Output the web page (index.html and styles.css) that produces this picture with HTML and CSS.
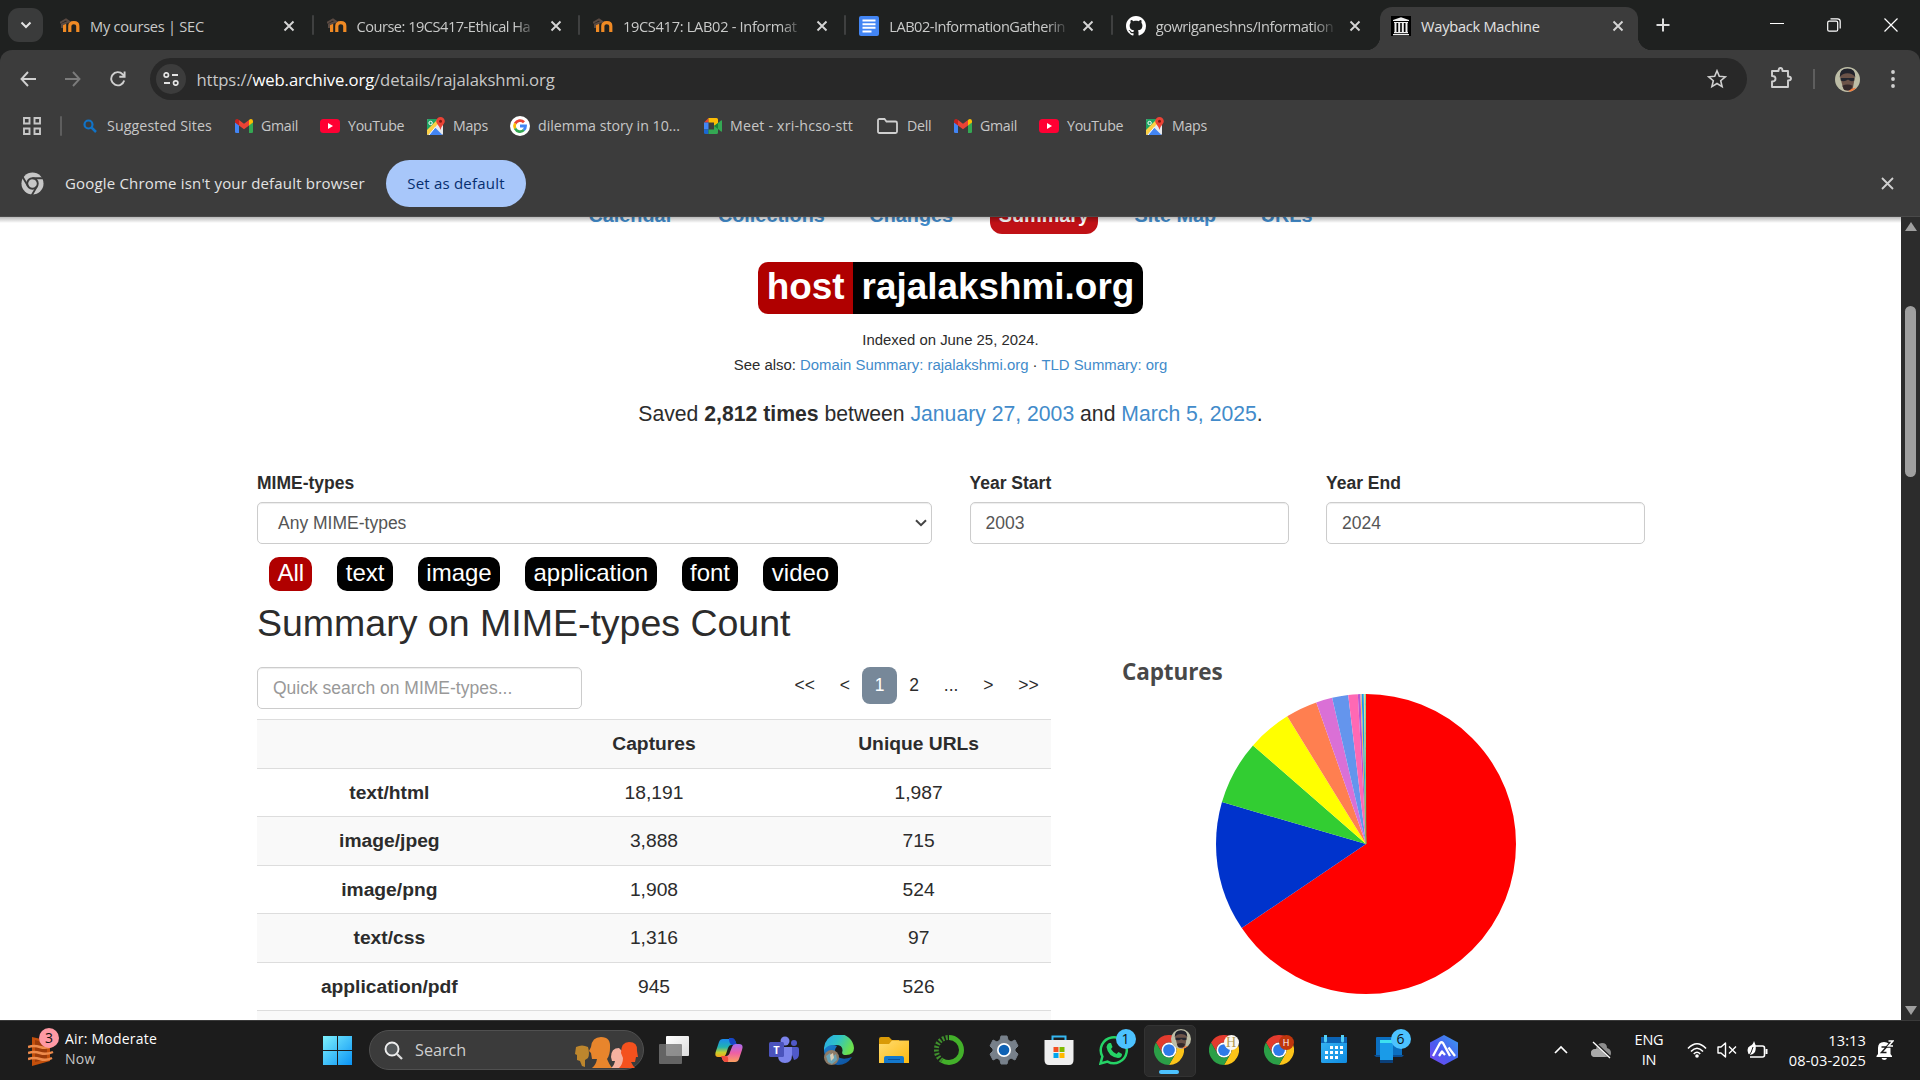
FILE: index.html
```html
<!DOCTYPE html>
<html lang="en">
<head>
<meta charset="utf-8">
<title>Wayback Machine</title>
<link rel="stylesheet" href="styles.css">
</head>
<body>
<svg class="defs" width="0" height="0" aria-hidden="true">
  <defs>
    <linearGradient id="gWin" x1="0" y1="0" x2="1" y2="1"><stop offset="0" stop-color="#7df1fd"/><stop offset="1" stop-color="#0a93f5"/></linearGradient>
    <linearGradient id="gTv" x1="0" y1="0" x2="1" y2="1"><stop offset="0" stop-color="#fff"/><stop offset="1" stop-color="#dcdcdc"/></linearGradient>
    <linearGradient id="gCpA" x1="0" y1="0" x2="0" y2="1"><stop offset="0" stop-color="#1a8bf0"/><stop offset=".45" stop-color="#22b2b0"/><stop offset=".75" stop-color="#c6d02c"/><stop offset="1" stop-color="#f9a11b"/></linearGradient>
    <linearGradient id="gCpB" x1="0" y1="0" x2="0" y2="1"><stop offset="0" stop-color="#a86bf0"/><stop offset=".5" stop-color="#ee5fa5"/><stop offset="1" stop-color="#fba060"/></linearGradient>
    <linearGradient id="gEdge" x1="0" y1="0" x2="1" y2=".4"><stop offset="0" stop-color="#2aa5ea"/><stop offset=".5" stop-color="#2ec3c8"/><stop offset="1" stop-color="#6be04e"/></linearGradient>
    <linearGradient id="gEdge2" x1="0" y1="0" x2="1" y2="1"><stop offset="0" stop-color="#1b7fd0"/><stop offset="1" stop-color="#0c4f9c"/></linearGradient>
    <linearGradient id="gFold" x1="0" y1="0" x2="1" y2="1"><stop offset="0" stop-color="#ffdc72"/><stop offset="1" stop-color="#fdb90f"/></linearGradient>
    <linearGradient id="gCal" x1="0" y1="0" x2="1" y2="1"><stop offset="0" stop-color="#38b6f5"/><stop offset="1" stop-color="#0f8be0"/></linearGradient>
    <linearGradient id="gHex" x1="0" y1="1" x2="1" y2="0"><stop offset="0" stop-color="#7a46f2"/><stop offset=".45" stop-color="#4a5cf0"/><stop offset="1" stop-color="#3a9df0"/></linearGradient>
    <symbol id="chrome" viewBox="0 0 48 48">
      <path fill="#e33b2e" d="M3.2 12A24 24 0 0 1 44.8 12H24A12 12 0 0 0 13.6 30Z"/>
      <path fill="#fcc419" d="M44.8 12A24 24 0 0 1 24 48L34.4 30A12 12 0 0 0 24 12Z"/>
      <path fill="#2b9f47" d="M24 48A24 24 0 0 1 3.2 12L13.6 30A12 12 0 0 0 34.4 30Z"/>
      <circle cx="24" cy="24" r="12" fill="#fff"/><circle cx="24" cy="24" r="9.4" fill="#2f7ae8"/>
    </symbol>
    <symbol id="moodle" viewBox="0 0 20 16">
      <path d="M4.600 14V6M9.800 14V8Q9.800 4.700 13.800 4.700T17.800 8V14" fill="none" stroke="#f08a24" stroke-width="3.200"/>
      <path d="M0 5L6 1.500L9 3.500L2 6.500V10" fill="none" stroke="#5a4a42" stroke-width="2"/>
    </symbol>
    <symbol id="x" viewBox="0 0 12 12"><path d="M1.500 1.500L10.500 10.500M10.500 1.500L1.500 10.500" fill="none" stroke="currentColor" stroke-width="1.900"/></symbol>
    <symbol id="gmail" viewBox="0 0 18 14">
      <path fill="#4285f4" d="M0 3V12.700Q0 14 1.300 14H4V6Z"/><path fill="#34a853" d="M18 3V12.700Q18 14 16.700 14H14V6Z"/>
      <path fill="#c5221f" d="M0 2Q.3 0 2 0Q3 0 4 1V6.500L0 3.500Z"/><path fill="#fbbc04" d="M18 2Q17.700 0 16 0Q15 0 14 1V6.500L18 3.500Z"/>
      <path fill="#ea4335" d="M4 1L9 4.800L14 1V6.500L9 10.200L4 6.500Z"/>
    </symbol>
    <symbol id="youtube" viewBox="0 0 20 14"><rect width="20" height="14" rx="3.500" fill="#ff0033"/><path d="M8 4L13 7L8 10Z" fill="#fff"/></symbol>
    <symbol id="maps" viewBox="0 0 18 18">
      <rect y="2" width="16" height="16" rx="1.500" fill="#e8eaed"/><path d="M0 3.500Q0 2 1.500 2H12L0 14Z" fill="#1fa463"/>
      <path d="M0 16.500V13L11 2H15L1.500 18Q0 18 0 16.500Z" fill="#fdd045"/><path d="M1.500 18L8 10.500L15.500 18Z" fill="#4285f4"/>
      <path d="M2 18L8.500 10" stroke="#fff" stroke-width="1"/><circle cx="3.600" cy="6" r="1.700" fill="none" stroke="#fff"/>
      <path d="M13.500 0A4.300 4.300 0 0 1 17.800 4.300C17.800 7 14.500 8.500 13.500 13C12.500 8.500 9.200 7 9.200 4.300A4.300 4.300 0 0 1 13.500 0Z" fill="#ea4335"/><circle cx="13.500" cy="4.200" r="1.500" fill="#811b14"/>
    </symbol>
    <symbol id="face" viewBox="0 0 24 24">
      <circle cx="12" cy="12" r="12" fill="#bdbda6"/><path d="M5 10Q5 2 12 2T19 10L17 21Q12 25 8 21Z" fill="#6b5248"/>
      <path d="M4.500 10Q4 1.500 12 1.500T19.500 10Q17 6 12 6Q7 6 4.500 10Z" fill="#22232c"/><path d="M5.500 10.500H18.500V13Q15.500 14.500 12.500 12Q9 14.500 5.500 13Z" fill="#23262f"/>
      <path d="M7 18Q12 15.500 17 18L15 22H9Z" fill="#33282a"/><path d="M13 23.500Q16 20 20.500 20Q17 24 13 23.500Z" fill="#f47d3c"/>
    </symbol>
  </defs>
</svg>

<div class="screen">
  <header class="chrome">
    <div class="tabstrip">
      <div class="tabmenu"><svg width="12" height="8" viewBox="0 0 12 8"><path d="M1.500 1.500L6 6L10.500 1.500" fill="none" stroke="#e3e3e3" stroke-width="2"/></svg></div>
      <div class="tabs">
        <div class="tab"><svg class="fav" viewBox="0 0 20 16"><use href="#moodle"/></svg><span class="tabtitle">My courses | SEC</span><svg class="tabx"><use href="#x"/></svg></div>
        <div class="tab"><svg class="fav" viewBox="0 0 20 16"><use href="#moodle"/></svg><span class="tabtitle fade">Course: 19CS417-Ethical Ha</span><svg class="tabx"><use href="#x"/></svg></div>
        <div class="tab"><svg class="fav" viewBox="0 0 20 16"><use href="#moodle"/></svg><span class="tabtitle fade">19CS417: LAB02 - Informat</span><svg class="tabx"><use href="#x"/></svg></div>
        <div class="tab"><svg class="fav" viewBox="0 0 20 20"><rect width="20" height="20" rx="2" fill="#4285f4"/><path d="M3.500 4.500H16.500M3.500 8.200H16.500M3.500 11.800H16.500M3.500 15.500H12.500" stroke="#fff" stroke-width="2"/></svg><span class="tabtitle fade">LAB02-InformationGatherin</span><svg class="tabx"><use href="#x"/></svg></div>
        <div class="tab last"><svg class="fav" viewBox="0 0 16 16"><path fill="#fff" d="M8 0C3.580 0 0 3.580 0 8c0 3.540 2.290 6.530 5.470 7.590.4.070.55-.17.55-.38 0-.19-.01-.82-.01-1.490-2.010.37-2.530-.49-2.690-.94-.09-.23-.48-.94-.82-1.130-.28-.15-.68-.52-.01-.53.63-.01 1.080.58 1.230.82.72 1.210 1.870.87 2.330.66.070-.52.280-.87.510-1.070-1.780-.2-3.640-.89-3.640-3.950 0-.87.310-1.590.820-2.150-.08-.2-.36-1.020.08-2.120 0 0 .67-.21 2.200.82.64-.18 1.320-.27 2-.27s1.360.09 2 .27c1.530-1.040 2.200-.82 2.200-.82.44 1.100.16 1.920.08 2.120.51.56.82 1.270.82 2.150 0 3.070-1.870 3.750-3.650 3.950.29.25.54.73.54 1.480 0 1.070-.01 1.930-.01 2.200 0 .21.15.46.55.38A8.010 8.010 0 0 0 16 8c0-4.420-3.580-8-8-8z"/></svg><span class="tabtitle fade">gowriganeshns/Information</span><svg class="tabx"><use href="#x"/></svg></div>
        <div class="tab active"><svg class="fav" viewBox="0 0 20 20"><rect width="20" height="20" fill="#000"/><path d="M2 4L10 1.200L18 4V5H2ZM3 6H17V7H3ZM3 16H17V17.200H3ZM2 18H18V19.200H2Z" fill="#eee"/><path d="M4.500 7V16M8.200 7V16M11.800 7V16M15.500 7V16" stroke="#eee" stroke-width="2"/></svg><span class="tabtitle">Wayback Machine</span><svg class="tabx"><use href="#x"/></svg></div>
      </div>
      <svg class="plus" width="14" height="14" viewBox="0 0 14 14"><path d="M7 .5V13.500M.5 7H13.500" stroke="#dcdcdc" stroke-width="2"/></svg>
      <div class="wincontrols">
        <svg width="14" height="14" viewBox="0 0 14 14"><path d="M0 5.500H14" stroke="#fff"/></svg>
        <svg width="14" height="14" viewBox="0 0 14 14"><rect x=".7" y="3.200" width="10" height="10" rx="1.500" fill="none" stroke="#fff" stroke-width="1.200"/><path d="M3.500 .8H10.500Q13.200 .8 13.200 3.500V10.500" fill="none" stroke="#fff" stroke-width="1.200"/></svg>
        <svg width="14" height="14" viewBox="0 0 14 14"><path d="M.5 .5L13.500 13.500M13.500 .5L.5 13.500" stroke="#fff" stroke-width="1.200"/></svg>
      </div>
    </div>

    <div class="toolbar">
      <div class="navbtns">
        <svg width="16" height="16" viewBox="0 0 16 16"><path d="M8 1L1.500 8L8 15M1.500 8H16" fill="none" stroke="#d0d0d0" stroke-width="1.900"/></svg>
        <svg width="16" height="16" viewBox="0 0 16 16"><path d="M8 1L14.500 8L8 15M14.500 8H0" fill="none" stroke="#7b7b7b" stroke-width="1.900"/></svg>
        <svg width="16" height="16" viewBox="0 0 16 16"><path d="M14.200 9.500A6.600 6.600 0 1 1 12.700 3.300L14.500 5.200M14.600 .5V5.800H9.300" fill="none" stroke="#d0d0d0" stroke-width="1.900"/></svg>
      </div>
      <div class="omnibox">
        <div class="siteinfo"><svg width="16" height="14" viewBox="0 0 16 14"><path d="M9 3H15M1 11H7" stroke="#e3e3e3" stroke-width="2"/><circle cx="3.300" cy="3" r="2.200" fill="none" stroke="#e3e3e3" stroke-width="1.700"/><circle cx="12.700" cy="11" r="2.200" fill="none" stroke="#e3e3e3" stroke-width="1.700"/></svg></div>
        <span class="url">https://<b>web.archive.org</b>/details/rajalakshmi.org</span>
        <svg class="star" width="20" height="20" viewBox="0 0 20 20"><path d="M10 1.800L12.300 7.300L18.300 7.800L13.700 11.700L15.100 17.600L10 14.500L4.900 17.600L6.300 11.700L1.700 7.800L7.700 7.300Z" fill="none" stroke="#d0d0d0" stroke-width="1.600"/></svg>
      </div>
      <svg class="ext" width="22" height="22" viewBox="0 0 22 22"><path d="M2 4H8.500Q8.500 1 10.500 1T12.500 4H18V9.500Q21 9.500 21 11.500T18 13.500V20H2V14.500Q5.500 14.500 5.500 11.700T2 9Z" fill="none" stroke="#d0d0d0" stroke-width="1.900" stroke-linejoin="round"/></svg>
      <i class="tsep"></i>
      <svg class="avatar"><use href="#face"/></svg>
      <svg class="dots" width="4" height="18" viewBox="0 0 4 18"><circle cx="2" cy="2" r="1.900" fill="#d0d0d0"/><circle cx="2" cy="9" r="1.900" fill="#d0d0d0"/><circle cx="2" cy="16" r="1.900" fill="#d0d0d0"/></svg>
    </div>

    <nav class="bookmarks">
      <svg class="apps" width="18" height="18" viewBox="0 0 18 18"><path d="M1 1H6.500V6.500H1ZM11.500 1H17V6.500H11.500ZM1 11.500H6.500V17H1ZM11.500 11.500H17V17H11.500Z" fill="none" stroke="#c7c7c7" stroke-width="1.900"/></svg>
      <i class="bsep"></i>
      <a class="bm b1"><svg width="14" height="14" viewBox="0 0 14 14"><circle cx="5.500" cy="5.500" r="4" fill="none" stroke="#1173c7" stroke-width="2.200"/><path d="M8.500 8.500L13 13" stroke="#1173c7" stroke-width="2.500"/></svg><span>Suggested Sites</span></a>
      <a class="bm b2"><svg width="18" height="14"><use href="#gmail"/></svg><span>Gmail</span></a>
      <a class="bm b3"><svg width="20" height="14"><use href="#youtube"/></svg><span>YouTube</span></a>
      <a class="bm b4"><svg width="18" height="18"><use href="#maps"/></svg><span>Maps</span></a>
      <a class="bm b5"><svg width="20" height="20" viewBox="0 0 20 20"><circle cx="10" cy="10" r="10" fill="#fff"/><g fill="none" stroke-width="2.800"><path d="M5.200 7.500A5.500 5.500 0 0 1 14 6.200" stroke="#ea4335"/><path d="M5.200 12.600A5.500 5.500 0 0 1 5.200 7.400" stroke="#fbbc05"/><path d="M14 13.900A5.500 5.500 0 0 1 5.100 12.500" stroke="#34a853"/><path d="M10 10H15.500Q15.500 12.500 13.800 14" stroke="#4285f4"/></g></svg><span>dilemma story in 10...</span></a>
      <a class="bm b6"><svg width="18" height="16" viewBox="0 0 18 16"><path d="M0 4.500L4.500 0V4.500Z" fill="#ea4335"/><path d="M4.500 0H12.500Q14 0 14 1.500V6L10 8V4.500H4.500Z" fill="#fbbc04"/><path d="M0 4.500H4.500V11.500H0Z" fill="#4285f4"/><path d="M0 11.500H4.500V16H1.500Q0 16 0 14.500Z" fill="#1967d2"/><path d="M4.500 11.500H10V8L14 5L17 2.500Q18 2 18 3V13Q18 14 17 13.500L14 11V14.500Q14 16 12.500 16H4.500Z" fill="#34a853"/><path d="M10 8L14 5V11Z" fill="#188038"/></svg><span>Meet - xri-hcso-stt</span></a>
      <a class="bm b7"><svg width="21" height="16" viewBox="0 0 21 16"><path d="M1 2.500Q1 1 2.500 1H7.500L9.500 3.500H18.500Q20 3.500 20 5V13.500Q20 15 18.500 15H2.500Q1 15 1 13.500Z" fill="none" stroke="#d0d0d0" stroke-width="1.800"/></svg><span>Dell</span></a>
      <a class="bm b8"><svg width="18" height="14"><use href="#gmail"/></svg><span>Gmail</span></a>
      <a class="bm b9"><svg width="20" height="14"><use href="#youtube"/></svg><span>YouTube</span></a>
      <a class="bm b10"><svg width="18" height="18"><use href="#maps"/></svg><span>Maps</span></a>
    </nav>

    <div class="infobar">
      <svg width="23" height="23" viewBox="0 0 48 48"><circle cx="24" cy="24" r="23" fill="#c7c7c7"/><circle cx="24" cy="24" r="11" fill="none" stroke="#3c3c3c" stroke-width="4"/><path d="M24 13H46M14.500 29.500L3.500 10.500M33.500 29.500L22.500 48.500" stroke="#3c3c3c" stroke-width="4"/></svg>
      <span class="infotext">Google Chrome isn't your default browser</span>
      <span class="setdefault">Set as default</span>
      <svg class="infox" width="13" height="13" viewBox="0 0 13 13"><path d="M1 1L12 12M12 1L1 12" stroke="#d0d0d0" stroke-width="1.800"/></svg>
    </div>
  </header>

  <div class="viewport">
    <main class="page">
      <nav class="views"><a>Calendar</a><a>Collections</a><a>Changes</a><a class="on">Summary</a><a>Site Map</a><a>URLs</a></nav>
      <h1 class="host"><span class="kind">host</span><span class="name">rajalakshmi.org</span></h1>
      <p class="meta">Indexed on June 25, 2024.</p>
      <p class="meta">See also: <a>Domain Summary: rajalakshmi.org</a> · <a>TLD Summary: org</a></p>
      <p class="saved">Saved <b>2,812 times</b> between <a>January 27, 2003</a> and <a>March 5, 2025</a>.</p>

      <div class="filters">
        <div class="field"><label>MIME-types</label><div class="control select"><span>Any MIME-types</span><svg width="12" height="8" viewBox="0 0 12 8"><path d="M1 1.200L6 6.200L11 1.200" fill="none" stroke="#444" stroke-width="2"/></svg></div></div>
        <div class="field"><label>Year Start</label><div class="control">2003</div></div>
        <div class="field"><label>Year End</label><div class="control">2024</div></div>
      </div>
      <div class="pills"><span class="all">All</span><span>text</span><span>image</span><span>application</span><span>font</span><span>video</span></div>
      <h2>Summary on MIME-types Count</h2>

      <div class="split">
        <section class="tablecol">
          <div class="tabletools">
            <div class="control search">Quick search on MIME-types...</div>
            <div class="pager"><span>&lt;&lt;</span><span>&lt;</span><span class="cur">1</span><span>2</span><span>...</span><span>&gt;</span><span>&gt;&gt;</span></div>
          </div>
          <div class="table">
            <div class="row head"><b></b><b>Captures</b><b>Unique URLs</b></div>
            <div class="row"><b>text/html</b><span>18,191</span><span>1,987</span></div>
            <div class="row"><b>image/jpeg</b><span>3,888</span><span>715</span></div>
            <div class="row"><b>image/png</b><span>1,908</span><span>524</span></div>
            <div class="row"><b>text/css</b><span>1,316</span><span>97</span></div>
            <div class="row"><b>application/pdf</b><span>945</span><span>526</span></div>
            <div class="row"></div>
          </div>
        </section>
        <section class="chart">
          <h3>Captures</h3>
          <svg class="pie" width="300" height="300" viewBox="0 0 300 300">
            <g fill="none" stroke-width="150" transform="rotate(-90 150 150)">
              <circle cx="150" cy="150" r="75" pathLength="360" stroke="#ff0000" stroke-dasharray="235.900 124.100"/>
              <circle cx="150" cy="150" r="75" pathLength="360" stroke="#0033cc" stroke-dasharray="50.400 309.600" stroke-dashoffset="-235.900"/>
              <circle cx="150" cy="150" r="75" pathLength="360" stroke="#32cd32" stroke-dasharray="24.800 335.200" stroke-dashoffset="-286.300"/>
              <circle cx="150" cy="150" r="75" pathLength="360" stroke="#ffff00" stroke-dasharray="17.200 342.800" stroke-dashoffset="-311.100"/>
              <circle cx="150" cy="150" r="75" pathLength="360" stroke="#ff7f50" stroke-dasharray="12.300 347.700" stroke-dashoffset="-328.300"/>
              <circle cx="150" cy="150" r="75" pathLength="360" stroke="#da70d6" stroke-dasharray="6.300 353.700" stroke-dashoffset="-340.600"/>
              <circle cx="150" cy="150" r="75" pathLength="360" stroke="#6495ed" stroke-dasharray="6.200 353.800" stroke-dashoffset="-346.900"/>
              <circle cx="150" cy="150" r="75" pathLength="360" stroke="#ff69b4" stroke-dasharray="3.700 356.300" stroke-dashoffset="-353.100"/>
              <circle cx="150" cy="150" r="75" pathLength="360" stroke="#ba55d3" stroke-dasharray="1 359" stroke-dashoffset="-356.800"/>
              <circle cx="150" cy="150" r="75" pathLength="360" stroke="#e59a2c" stroke-dasharray=".5 359.500" stroke-dashoffset="-357.800"/>
              <circle cx="150" cy="150" r="75" pathLength="360" stroke="#1e9be8" stroke-dasharray=".8 359.200" stroke-dashoffset="-358.300"/>
              <circle cx="150" cy="150" r="75" pathLength="360" stroke="#c4b43a" stroke-dasharray=".4 359.600" stroke-dashoffset="-359.100"/>
              <circle cx="150" cy="150" r="75" pathLength="360" stroke="#2fc46c" stroke-dasharray=".5 359.500" stroke-dashoffset="-359.500"/>
            </g>
          </svg>
        </section>
      </div>
    </main>
    <div class="scrollbar"><i class="up"></i><i class="thumb"></i><i class="down"></i></div>
  </div>

  <footer class="taskbar">
    <div class="weather">
      <div class="stack"><svg width="26" height="30" viewBox="0 0 26 30"><path d="M4 1L22 5V25L4 30Z" fill="#c4500c"/><path d="M7 4L19 7V23L7 26Z" fill="#9c3b0a"/><path d="M0 11Q6 9 12 11T24 10M0 17Q6 15 12 17T25 16M0 23Q6 21 12 23T24 22" fill="none" stroke="#ee8b4c" stroke-width="2.400"/></svg><em class="badge pink">3</em></div>
      <div class="wtext"><span>Air: Moderate</span><small>Now</small></div>
    </div>
    <svg class="start" width="29" height="29" viewBox="0 0 29 29"><path d="M0 0H14V14H0ZM15 0H29V14H15ZM0 15H14V29H0ZM15 15H29V29H15Z" fill="url(#gWin)"/></svg>
    <div class="searchbox">
      <svg width="19" height="19" viewBox="0 0 19 19"><circle cx="8" cy="8" r="6.500" fill="#54585a" stroke="#eee" stroke-width="1.900"/><path d="M12.700 12.700L18 18" stroke="#ddd" stroke-width="2.300"/></svg>
      <span>Search</span>
      <svg class="people" width="64" height="32" viewBox="0 0 64 32"><path d="M1 11Q7 8 13 11Q15 18 13 22L10 24V31L7 30L5 25L2 24L2 19L0 18Z" fill="#bd862d"/><path d="M17 32Q21 29 22 23H17L16 17L14 15L16 11Q17 1 26 1Q36 1 35 12Q35 19 32 23Q34 28 37 32Z" fill="#e8852c"/><path d="M36 32Q39 30 40 25H37L36 21Q36 12 44 12L50 18V32Z" fill="#f4b1a0"/><path d="M44 32Q48 28 48 22L46 17Q46 6 54 6Q63 6 62 15L63 21H61L60 26H56Q58 30 60 32Z" fill="#f4511e"/></svg>
    </div>
    <div class="apps-row">
      <span><svg width="30" height="30" viewBox="0 0 30 30"><rect x="7" y="1" width="23" height="20" rx="1" fill="url(#gTv)"/><rect x="0" y="9" width="23" height="20" rx="1" fill="#777" fill-opacity=".8"/></svg></span>
      <span><svg width="28" height="28" viewBox="0 0 28 28"><path d="M8 3H17Q20 3 21 7L22 9H16Q14 9 13 12L11 18Q10 21 7 21H3Q-1 21 1 15L4 6Q5 3 8 3Z" fill="url(#gCpA)"/><path d="M14 2H17Q20 2 21 7L22 9H17Q14 8 14 2Z" fill="#1746c7"/><path d="M20 26H11Q8 26 7 22L6 20H11Q14 20 15 16L17 11Q18 8 21 8H24Q29 8 27 14L24 23Q23 26 20 26Z" fill="url(#gCpB)"/><path d="M6 20H11Q14 20 13 26H11Q8 26 7 22Z" fill="#ee4b3e"/></svg></span>
      <span><svg width="30" height="30" viewBox="0 0 30 30"><circle cx="25" cy="8" r="3" fill="#5059c9"/><path d="M20 12H28Q30 12 30 14V19Q30 24 25 25Z" fill="#5059c9"/><circle cx="16" cy="6" r="4.500" fill="#7b83eb"/><path d="M9 12H23V20Q23 28 16 28Q9 28 9 20Z" fill="#7b83eb"/><rect x="0" y="7" width="15" height="15" rx="1.500" fill="#4b53bc"/><text x="7.500" y="18.500" class="teamsT">T</text></svg></span>
      <span><svg width="30" height="30" viewBox="0 0 30 30"><path d="M0 15A15 15 0 0 1 30 13Q30 20 22 20Q17 20 18.500 16Q19 10 12 10Q4 10 0 17Z" fill="url(#gEdge)"/><path d="M0 15Q5 8 13 11Q9 16 13 21Q18 26 28 22Q23 30 14 30A15 15 0 0 1 0 15Z" fill="url(#gEdge2)"/><circle cx="7.500" cy="22.500" r="7.500" fill="#8d7b68"/><path d="M2 21L6 18L8 22L12 19L13 25L8 29L4 27Z" fill="#6aa3b6"/><path d="M6 20L9 18L10 23L7 26Z" fill="#d9cdb7"/></svg></span>
      <span><svg width="30" height="30" viewBox="0 0 30 30"><path d="M0 4Q0 2 2 2H10L13 5H20V12H0Z" fill="#d99a07"/><path d="M0 9H10L13 5.500H30V28H0Z" fill="url(#gFold)"/><path d="M5 28V23Q5 21 7 21H23Q25 21 25 23V28Z" fill="#1478cc"/><path d="M9 24.500H21" stroke="#0b519b"/></svg></span>
      <span><svg width="30" height="30" viewBox="0 0 30 30"><path d="M15 2.500A12.500 12.500 0 0 1 15 27.500Q11 27.500 8 25.500" fill="none" stroke="#43b02a" stroke-width="5"/><path d="M8 25.500A12.500 12.500 0 0 1 15 2.500" fill="none" stroke="#3f8f2d" stroke-width="5" stroke-dasharray="2 1.600"/></svg></span>
      <span><svg width="30" height="30" viewBox="0 0 30 30"><path d="M12 1H18L19 5L22 7L26 5L29 11L26 14V16L29 19L26 25L22 23L19 25L18 29H12L11 25L8 23L4 25L1 19L4 16V14L1 11L4 5L8 7L11 5Z" fill="#77808a" stroke="#77808a" stroke-linejoin="round"/><circle cx="15" cy="15" r="7" fill="#fff"/><circle cx="15" cy="15" r="5.300" fill="#0f62b4"/></svg></span>
      <span><svg width="30" height="30" viewBox="0 0 30 30"><path d="M8.500 7V1.500H21.500V7" fill="none" stroke="#35b7f1" stroke-width="2"/><path d="M.5 5H29.500V25Q29.500 30 25 30H5Q.5 30 .5 25Z" fill="#efefef"/><path d="M9.500 12H14.500V17H9.500Z" fill="#f25022"/><path d="M15.500 12H20.500V17H15.500Z" fill="#7fba00"/><path d="M9.500 18H14.500V23H9.500Z" fill="#00a4ef"/><path d="M15.500 18H20.500V23H15.500Z" fill="#ffb900"/></svg></span>
      <span><svg width="30" height="30" viewBox="0 0 30 30"><path d="M1.500 28.500L3.400 21.500A13 13 0 1 1 8.500 26.600Z" fill="none" stroke="#25d366" stroke-width="2.500"/><path d="M10 8L12 8L13.500 12L12 14Q14 17.500 17.500 19L19.500 17L23 19Q23 23 19 23Q9 21.500 7.500 12Q8 9 10 8Z" fill="#25d366"/></svg><em class="badge blue">1</em></span>
      <span class="running"><svg width="30" height="30"><use href="#chrome"/></svg><svg class="mini"><use href="#face"/></svg></span>
      <span><svg width="30" height="30"><use href="#chrome"/></svg><em class="chip cream">H</em></span>
      <span><svg width="30" height="30"><use href="#chrome"/></svg><em class="chip brick">H</em></span>
      <span><svg width="30" height="30" viewBox="0 0 30 30"><rect x="2" y="2" width="26" height="26" rx="1.500" fill="url(#gCal)"/><path d="M2 2H28V8H2Z" fill="#0b63b5"/><path d="M6.500 0V6M23.500 0V6" stroke="#54d1f7" stroke-width="3" stroke-linecap="round"/><path d="M11 12.500H14M16 12.500H19M21 12.500H24M6 17.500H9M11 17.500H14M16 17.500H19M21 17.500H24M6 22.500H9M11 22.500H14M16 22.500H19" stroke="#fff" stroke-width="3"/></svg></span>
      <span><svg width="30" height="30" viewBox="0 0 30 30"><rect x="2" y="2" width="26" height="19" rx="1" fill="#0b6fc0"/><path d="M0 20H30L28 22H2Z" fill="#0b4f93"/><rect x="6" y="5" width="13" height="23" rx="1" fill="#1a9be8"/><path d="M6 5H19V8H6Z" fill="#3ee0f0"/><path d="M6 25H19V28H6Z" fill="#0b3f78"/></svg><em class="badge blue">6</em></span>
      <span><svg width="30" height="30" viewBox="0 0 30 30"><path d="M15 0L29 7.500V22.500L15 30L1 22.500V7.500Z" fill="url(#gHex)"/><path d="M4 21L11 8Q12.500 6.500 14 8L21 21M10 21L13 16.500L16 20M19.500 12.500L26 21" fill="none" stroke="#fff" stroke-width="2.300" stroke-linejoin="round"/></svg></span>
    </div>
    <div class="tray">
      <svg class="chev" width="14" height="9" viewBox="0 0 14 9"><path d="M1 8L7 2L13 8" fill="none" stroke="#fff" stroke-width="1.700"/></svg>
      <svg class="cloud" width="22" height="18" viewBox="0 0 22 18"><path d="M5 16Q1 16 1 12T6 8Q7 2 12 2T17 7Q21 8 21 12T17 16Z" fill="#8d8d8d"/><path d="M6 8Q12 7 16 16H5Q1 16 1 12T6 8Z" fill="#aaa"/><path d="M3.500 .5L20.500 16.500" stroke="#1c1c1c" stroke-width="2.500"/><path d="M3 1L20 17" stroke="#fff" stroke-width="1.300"/></svg>
      <div class="lang"><span>ENG</span><span>IN</span></div>
      <svg class="wifi" width="20" height="16" viewBox="0 0 20 16"><path d="M1 6.500Q10 -3 19 6.500M4 9.500Q10 3 16 9.500M6.800 12Q10 8.500 13.200 12" fill="none" stroke="#fff" stroke-width="1.600"/><circle cx="10" cy="14" r="1.800" fill="#fff"/></svg>
      <svg class="vol" width="20" height="16" viewBox="0 0 20 16"><path d="M1 5H4L8.500 1V15L4 11H1Z" fill="none" stroke="#fff" stroke-width="1.400" stroke-linejoin="round"/><path d="M12 4.500L19 11.500M19 4.500L12 11.500" stroke="#fff" stroke-width="1.400"/></svg>
      <svg class="batt" width="21" height="18" viewBox="0 0 21 18"><path d="M8 5H15.500Q17.500 5 17.500 7V14Q17.500 16 15.500 16H3" fill="none" stroke="#fff" stroke-width="1.600"/><path d="M19.500 8V13" stroke="#fff" stroke-width="2"/><path d="M7 0Q10 6 8 11Q5 15 1.500 13Q-1 7 3 5Q6 4 7 0Z" fill="#fff"/><path d="M6 6Q5 11 1 16" fill="none" stroke="#1c1c1c"/></svg>
      <div class="clock"><span>13:13</span><span>08-03-2025</span></div>
      <svg class="bell" width="18" height="20" viewBox="0 0 18 20"><path d="M2 14V8Q2 2 8 2T14.500 8V14L16 16V17H.5V16Z" fill="#fff"/><path d="M5.500 18H11Q10.500 20 8.300 20T5.500 18Z" fill="#fff"/><path d="M5.500 7H10.500L5.500 12.500H10.500" fill="none" stroke="#1c1c1c" stroke-width="1.500"/><path d="M12.500 1H17L12.500 6H17" fill="none" stroke="#1c1c1c" stroke-width="3.500"/><path d="M12.500 1H17L12.500 6H17" fill="none" stroke="#fff" stroke-width="1.500"/></svg>
    </div>
  </footer>
</div>
</body>
</html>
```

FILE: styles.css
```css
* { box-sizing: border-box; }
body { margin: 0; background: #fff; }
svg { display: block; flex: none; }
.defs { position: absolute; }
.screen { width: 1920px; height: 1080px; overflow: hidden; display: flex; flex-direction: column; font-family: "Open Sans", "Noto Sans", sans-serif; }

/* Browser frame */
.chrome { height: 217px; flex: none; background: #1f2020; color: #e3e3e3; font-size: 14.2px; }
.tabstrip { height: 50px; display: flex; align-items: center; padding-left: 8px; background: #1f2120; }
.tabmenu { width: 35px; height: 34px; border-radius: 11px; background: #3a3b3b; display: flex; align-items: center; justify-content: center; }
.tabs { display: flex; height: 50px; margin-left: 13px; font-size: 14.600px; }
.tab { position: relative; width: 266.400px; height: 50px; display: flex; align-items: center; padding-left: 12px; padding-top: 1px; color: #c9cac9; letter-spacing: -.25px; }
.tab::after { content: ""; position: absolute; right: 1px; top: 15px; width: 2px; height: 20px; background: #3f4040; border-radius: 1px; }
.tab:first-child { padding-left: 4px; width: 258.500px; }
.tab.last::after, .tab.active::after { content: none; }
.fav { width: 20px; height: 20px; }
.tabtitle { width: 179px; margin-left: 10px; white-space: nowrap; line-height: 22px; flex: none; }
.tabtitle.fade { -webkit-mask-image: linear-gradient(90deg, #000 88%, transparent 101%); mask-image: linear-gradient(90deg, #000 88%, transparent 101%); }
.tab:nth-child(2) .tabtitle { letter-spacing: -.5px; }
.tab:nth-child(3) .tabtitle { letter-spacing: -.3px; }
.tab:nth-child(4) .tabtitle { letter-spacing: -.5px; }
.tab:nth-child(5) .tabtitle { letter-spacing: -.45px; }
.tabx { width: 12px; height: 12px; margin-left: 14px; color: #d5d5d5; }
.tab.active { width: 258px; height: 43px; margin-top: 7px; padding: 0 0 6px 11px; background: #3c3c3c; border-radius: 12px 12px 0 0; color: #e3e3e3; }
.tab.active::before { content: ""; position: absolute; left: -14px; right: -14px; bottom: 0; height: 14px; background: radial-gradient(circle at 0 0, transparent 14px, #3c3c3c 14.500px) left / 14px 14px no-repeat, radial-gradient(circle at 100% 0, transparent 14px, #3c3c3c 14.500px) right / 14px 14px no-repeat; }
.tab.active .tabtitle { width: 181px; }
.tab.active .tabx { margin-left: 10px; }
.plus { margin-left: 18px; }
.wincontrols { display: flex; gap: 43px; margin-left: auto; margin-right: 22px; padding-bottom: 1px; }
.toolbar { height: 58px; display: flex; align-items: center; background: #3c3c3c; border-radius: 12px 12px 0 0; padding: 0 21px 0 20px; }
.navbtns { display: flex; gap: 29px; width: 130px; padding-bottom: 1px; }
.omnibox { width: 1597px; height: 42px; border-radius: 21px; background: #282828; display: flex; align-items: center; padding-left: 6px; }
.siteinfo { width: 30px; height: 30px; border-radius: 50%; background: #3c3c3c; display: flex; align-items: center; justify-content: center; }
.url { margin-left: 10.500px; font-size: 16.700px; letter-spacing: -.12px; color: #c7c7c7; white-space: nowrap; }
.url b { font-weight: 400; color: #fff; }
.star { margin-left: auto; margin-right: 20px; }
.ext { margin-left: 23px; margin-top: -2px; }
.tsep { width: 2px; height: 20px; background: #5e5e5e; margin-left: 21px; }
.avatar { width: 25px; height: 25px; margin-left: 20px; }
.dots { margin-left: auto; margin-right: 4px; }
.bookmarks { height: 36px; display: flex; align-items: center; background: #3c3c3c; padding: 0 0 1px 23px; color: #c7c7c7; letter-spacing: -.3px; }
.bsep { width: 2px; height: 20px; margin: 0 21px 0 19px; background: #5e5e5e; border-radius: 1px; }
.bm { display: flex; align-items: center; gap: 8px; white-space: nowrap; }
.bm span { margin-top: -1px; }
.b1 { gap: 10px; width: 152px; letter-spacing: .12px; }
.b2 { width: 85px; }
.b3 { width: 107px; }
.b4 { width: 83px; }
.b5 { width: 194px; letter-spacing: 0; }
.b6 { width: 173px; letter-spacing: .2px; }
.b7 { gap: 9px; width: 77px; }
.b8 { width: 85px; }
.b9 { width: 107px; }
.infobar { height: 73px; background: #3c3c3c; display: flex; align-items: center; padding: 6px 26px 0 21px; border-bottom: 1px solid #4a4a4a; white-space: nowrap; }
.infotext { width: 321px; margin-left: 21px; font-size: 15px; letter-spacing: .18px; }
.setdefault { width: 140px; height: 47px; border-radius: 24px; background: #a8c7fa; color: #062e6f; display: flex; align-items: center; justify-content: center; font-weight: 500; font-size: 15px; letter-spacing: .2px; }
.infox { margin-left: auto; }

/* Web page */
.viewport { height: 803px; flex: none; display: flex; position: relative; background: #fff; }
.viewport::before { content: ""; position: absolute; left: 0; right: 19px; top: 0; height: 6px; z-index: 2; background: linear-gradient(rgba(0,0,0,.28), rgba(0,0,0,0)); }
.page { width: 1901px; overflow: hidden; color: #2c2c2c; font-family: "Liberation Sans", Arial, sans-serif; font-size: 17.500px; padding: 0 257px; }
.page a { color: #428bca; }
.page p, .page h1, .page h2, .page h3 { margin: 0; }
.views { display: flex; justify-content: center; gap: 28.500px; margin-top: -19px; font-size: 19.850px; font-weight: 700; line-height: 24px; }
.views a { padding: 5px 8px 7px; height: 36px; white-space: nowrap; }
.page .views .on { background: #c01116; color: #fff; border-radius: 12px; padding: 5px 9px 7px; }
.page .host { margin-top: 28px; height: 52px; display: flex; justify-content: center; font-size: 36.900px; line-height: 50px; color: #fff; }
.host span { padding: 0 8.500px 2px; }
.kind { background: #b00000; border-radius: 10px 0 0 10px; }
.name { background: #000; border-radius: 0 10px 10px 0; }
.meta { text-align: center; font-size: 14.900px; line-height: 25px; }
.page .host + .meta { margin-top: 14px; }
.page .saved { margin-top: 21px; text-align: center; font-size: 21.200px; line-height: 30px; }
.filters { display: grid; grid-template-columns: 675px 319px 319px; column-gap: 37.500px; margin-top: 42px; }
.field label { display: block; font-weight: 700; line-height: 25px; margin-bottom: 6px; }
.control { height: 42px; border: 1px solid #ccc; border-radius: 5px; padding: 0 15px; line-height: 40px; color: #555; box-shadow: inset 0 1px 1px rgba(0,0,0,.075); }
.select { display: flex; justify-content: space-between; align-items: center; padding: 0 4px 0 20px; }
.pills { display: flex; gap: 25px; margin: 13px 0 0 12px; font-size: 24px; line-height: 32px; color: #fff; }
.pills span { height: 34px; padding: 0 8.400px 2px; background: #000; border-radius: 10px; }
.pills .all { background: #b00000; }
.page h2 { margin-top: 11px; font-size: 37.500px; line-height: 42px; font-weight: 400; }
.split { display: flex; margin-top: 23px; }
.tablecol { width: 794px; }
.tabletools { display: flex; justify-content: space-between; margin-bottom: 10px; }
.search { width: 325px; color: #999; }
.pager { display: flex; height: 37px; line-height: 37px; }
.pager span { padding: 0 12.400px; }
.pager .cur { background: #778899; color: #fff; border-radius: 8px; }
.row { height: 48.400px; display: grid; grid-template-columns: repeat(3, 1fr); border-top: 1px solid #ddd; text-align: center; font-size: 19.250px; line-height: 47px; }
.row.head { height: 49px; line-height: 47px; }
.row:nth-child(odd) { background: #f9f9f9; }
.chart { margin-left: 71px; }
.page h3 { font-family: "Open Sans", "Noto Sans", sans-serif; font-size: 22.500px; line-height: 30px; letter-spacing: -.1px; margin-top: -10.500px; color: #484848; }
.pie { margin: 7.500px 0 0 93.500px; }
.scrollbar { width: 19px; background: #2c2c2c; display: flex; flex-direction: column; align-items: center; padding: 5px 0; }
.up, .down { border: 6.500px solid transparent; }
.up { border-top: 0; border-bottom: 9px solid #9f9f9f; }
.down { border-bottom: 0; border-top: 9px solid #9f9f9f; margin-top: auto; }
.thumb { width: 11px; height: 171px; margin-top: 75px; border-radius: 6px; background: #9f9f9f; }

/* Taskbar */
.taskbar { height: 60px; display: flex; align-items: center; background: #1c1c1c; border-top: 1px solid #3a3a3a; color: #fff; font-size: 14px; }
.taskbar em { font-style: normal; }
.weather { display: flex; width: 323px; padding-left: 28px; align-items: center; }
.stack { position: relative; }
.badge { position: absolute; right: -6px; top: -8px; width: 20px; height: 20px; border-radius: 50%; color: #111; text-align: center; line-height: 20px; font-size: 14px; }
.pink { background: #ff99a4; }
.blue { background: #4cc2ff; }
.stack .badge { right: -5px; top: -8px; }
.wtext { margin-left: 11px; margin-top: -3px; display: flex; flex-direction: column; line-height: 20px; letter-spacing: .22px; }
.wtext small { font-size: 14px; color: #c6c6c6; }
.start, .searchbox, .apps-row { margin-top: -1px; }
.searchbox { margin-left: 17px; width: 275px; height: 40px; border: 1px solid #505050; border-radius: 20px; background: #3b3b3b; display: flex; align-items: center; padding: 0 4px 0 14px; font-size: 16.200px; color: #cfcfcf; }
.searchbox span { margin-left: 12px; }
.people { margin-left: auto; margin-top: 4px; }
.apps-row { display: flex; margin-left: 2.500px; }
.apps-row span { position: relative; width: 55px; height: 50px; display: flex; align-items: center; justify-content: center; }
.apps-row .badge { right: 6px; top: 4px; }
.running::before { content: ""; position: absolute; left: 2.500px; top: 0; width: 50px; height: 50px; border: 1px solid #333; border-radius: 5px; background: #2a2a2a; }
.running::after { content: ""; position: absolute; left: 17.500px; bottom: 1px; width: 20px; height: 4px; border-radius: 2px; background: #4cc2ff; }
.running svg { position: relative; }
.running .mini { position: absolute; width: 20px; height: 20px; left: 29px; top: 4px; }
.chip { position: absolute; left: 27px; top: 10px; width: 15px; height: 15px; border-radius: 50%; font-size: 9px; line-height: 15px; text-align: center; }
.brick { background: #bf360c; }
.cream { background: #faf8f2; color: #b49b50; font-family: "Liberation Serif", serif; font-style: italic; font-size: 14px; }
.teamsT { fill: #fff; font-size: 11px; font-weight: 700; text-anchor: middle; }
.tray { display: flex; align-items: center; margin: -2px 26px 0 auto; letter-spacing: -.2px; }
.cloud { margin-left: 22px; }
.lang, .clock { display: flex; flex-direction: column; line-height: 20px; }
.lang { width: 46px; margin-left: 14px; text-align: center; align-items: center; font-size: 14.500px; }
.wifi { margin-left: 15px; }
.vol { margin-left: 10px; }
.batt { margin-left: 10px; }
.clock { width: 98px; text-align: right; font-size: 14.600px; letter-spacing: .1px; }
.bell { margin-left: 10px; }
```
